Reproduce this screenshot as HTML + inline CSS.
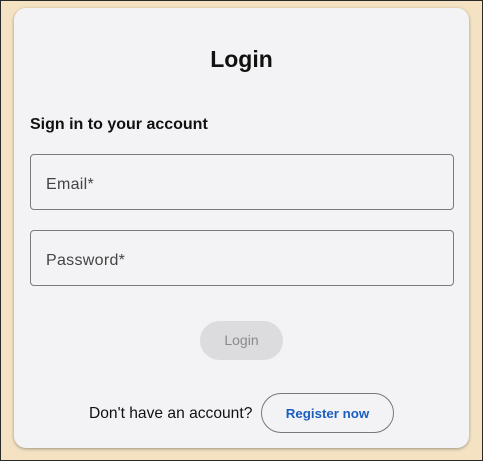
<!DOCTYPE html>
<html><head><style>
*{box-sizing:border-box;margin:0;padding:0}
body{width:483px;height:461px;background:#f4e2c3;border:1px solid #2a2a2a;position:relative;font-family:"Liberation Sans",Roboto,sans-serif;overflow:hidden}
.card{position:absolute;left:13px;top:7px;width:455px;height:440px;background:#f3f3f5;border-radius:12px;box-shadow:0 1px 3px rgba(0,0,0,.35)}
h1{position:absolute;left:0;right:0;top:38px;text-align:center;font-size:23px;font-weight:bold;color:#111}
.sub{position:absolute;left:16px;top:108px;font-size:16px;font-weight:bold;color:#111}
.f{position:absolute;left:16px;width:424px;height:56px;border:1px solid #7a7a80;border-radius:4px;font-size:16px;color:#444;padding:20px 15px;letter-spacing:.3px}
.btn{position:absolute;left:186px;top:313px;width:83px;height:39px;background:#dcdcdf;border-radius:20px;color:#8a8a8e;font-size:14px;text-align:center;line-height:39px}
.q{position:absolute;left:75px;top:397px;font-size:15.6px;color:#111}
.reg{position:absolute;left:247px;top:385px;width:133px;height:40px;border:1px solid #77777c;border-radius:20px;color:#1a5fc0;font-size:13.3px;font-weight:bold;text-align:center;line-height:39px}
</style></head><body>
<div class="card">
<h1>Login</h1>
<div class="sub">Sign in to your account</div>
<div class="f" style="top:146px;padding-top:21px">Email*</div>
<div class="f" style="top:222px;padding-top:21px">Password*</div>
<div class="btn">Login</div>
<div class="q">Don't have an account?</div>
<div class="reg">Register now</div>
</div>
</body></html>
